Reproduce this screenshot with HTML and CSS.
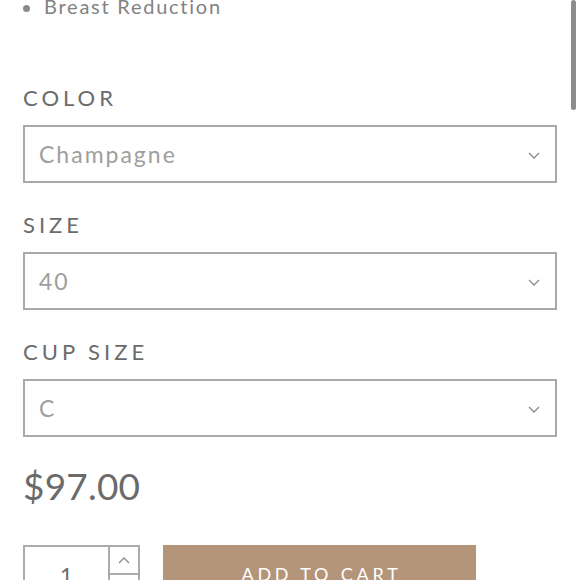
FILE: index.html
```html
<!DOCTYPE html>
<html lang="en">
<head>
<meta charset="utf-8">
<title>Product options</title>
<link rel="stylesheet" href="styles.css">
</head>
<body>
<div class="page">
  <ul class="features">
    <li>Breast Reduction</li>
  </ul>

  <div class="field">
    <div class="label">COLOR</div>
    <div class="select">
      <span class="value">Champagne</span>
      <svg class="chev" width="12" height="7" viewBox="0 0 12 7"><path d="M1 1l5 5 5-5" fill="none" stroke="#8a8a8a" stroke-width="1.3"/></svg>
    </div>
  </div>

  <div class="field">
    <div class="label">SIZE</div>
    <div class="select">
      <span class="value">40</span>
      <svg class="chev" width="12" height="7" viewBox="0 0 12 7"><path d="M1 1l5 5 5-5" fill="none" stroke="#8a8a8a" stroke-width="1.3"/></svg>
    </div>
  </div>

  <div class="field">
    <div class="label">CUP SIZE</div>
    <div class="select">
      <span class="value">C</span>
      <svg class="chev" width="12" height="7" viewBox="0 0 12 7"><path d="M1 1l5 5 5-5" fill="none" stroke="#8a8a8a" stroke-width="1.3"/></svg>
    </div>
  </div>

  <div class="price">$97.00</div>

  <div class="buy">
    <div class="qty">
      <div class="qty-num">1</div>
      <div class="qty-spin">
        <div class="spin-btn">
          <svg width="12" height="7" viewBox="0 0 12 7"><path d="M1 6l5-5 5 5" fill="none" stroke="#8a8a8a" stroke-width="1.3"/></svg>
        </div>
        <div class="spin-btn">
          <svg width="12" height="7" viewBox="0 0 12 7"><path d="M1 1l5 5 5-5" fill="none" stroke="#8a8a8a" stroke-width="1.3"/></svg>
        </div>
      </div>
    </div>
    <button class="add">ADD TO CART</button>
  </div>
</div>
<div class="scrollbar"></div>
</body>
</html>
```

FILE: styles.css
```css
html, body {
  margin: 0;
  padding: 0;
  background: #fff;
  overflow: hidden;
}

body {
  font-family: Lato, "Open Sans", sans-serif;
  color: #6b6b6b;
}

.page {
  padding: 0 23px;
  width: 534px;
}

.features {
  list-style: none;
  margin: -9px 0 0;
  padding: 0;
}

.features li {
  display: flex;
  align-items: center;
  font-size: 20px;
  line-height: 30px;
  letter-spacing: 1.75px;
  color: #828282;
}

.features li::before {
  content: "";
  width: 7px;
  height: 7px;
  border-radius: 50%;
  background: #8a8a8a;
  margin: 0 14px 0 0;
  flex: none;
  position: relative;
  top: 2px;
}

.field {
  margin-top: 29px;
}

.features + .field {
  margin-top: 64px;
}

.label {
  font-size: 22px;
  line-height: 26px;
  letter-spacing: 4px;
  color: #6b6b6b;
  margin-bottom: 14px;
}

.select {
  box-sizing: border-box;
  height: 58px;
  border: 2px solid #a9a9a9;
  display: flex;
  align-items: center;
  justify-content: space-between;
  padding: 0 15px 0 14px;
}

.value {
  font-size: 23px;
  letter-spacing: 2px;
  color: #9e9e9e;
}

.chev {
  display: block;
  margin-top: 2px;
}

.price {
  margin-top: 26px;
  font-size: 37px;
  line-height: 46px;
  color: #6b6b6b;
  letter-spacing: 0.2px;
}

.buy {
  margin-top: 36px;
  display: flex;
  gap: 23px;
}

.qty {
  box-sizing: border-box;
  width: 117px;
  height: 58px;
  border: 2px solid #ababab;
  display: flex;
}

.qty-num {
  flex: 1;
  display: flex;
  align-items: center;
  justify-content: center;
  font-size: 22px;
  color: #6b6b6b;
}

.qty-spin {
  width: 28px;
  border-left: 2px solid #ababab;
  display: flex;
  flex-direction: column;
}

.spin-btn {
  flex: 1;
  display: flex;
  align-items: center;
  justify-content: center;
}

.spin-btn + .spin-btn {
  border-top: 2px solid #ababab;
}

.add {
  width: 313px;
  height: 58px;
  border: none;
  background: #b4957a;
  color: #fff;
  font-family: Lato, "Open Sans", sans-serif;
  font-size: 18px;
  letter-spacing: 3.8px;
  padding: 0 0 0 4px;
}

.scrollbar {
  position: fixed;
  top: 0;
  right: 4px;
  width: 5px;
  height: 110px;
  border-radius: 3px;
  background: #8c8c8c;
}
```
